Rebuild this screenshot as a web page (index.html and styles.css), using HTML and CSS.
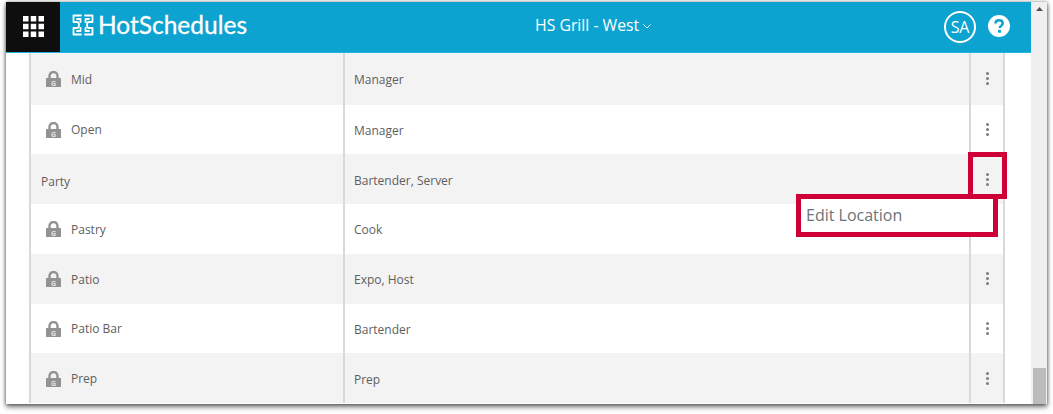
FILE: index.html
```html
<!DOCTYPE html>
<html lang="en">
<head>
<meta charset="utf-8">
<title>HotSchedules</title>
<link rel="stylesheet" href="styles.css">
</head>
<body>
<div class="window">
  <div class="page">
    <header class="topbar">
      <div class="apps">
        <svg width="21" height="21" viewBox="0 0 21 21" fill="#fff"><rect width="5.500" height="5.500"/><rect x="7.750" width="5.500" height="5.500"/><rect x="15.500" width="5.500" height="5.500"/><rect y="7.750" width="5.500" height="5.500"/><rect x="7.750" y="7.750" width="5.500" height="5.500"/><rect x="15.500" y="7.750" width="5.500" height="5.500"/><rect y="15.500" width="5.500" height="5.500"/><rect x="7.750" y="15.500" width="5.500" height="5.500"/><rect x="15.500" y="15.500" width="5.500" height="5.500"/></svg>
      </div>
      <div class="brand">
        <svg class="brand-mark" width="22" height="22" viewBox="0 0 22 22" fill="none" stroke="#fff" stroke-width="1.800" stroke-linejoin="round" stroke-linecap="round"><path d="M9 1.500H1.500V8H5c1.500 0 2 1 2 2.500M13 1.500h7.500V8H17c-1.500 0-2 1-2 2.500M9 20.500H1.500V14H5c1.500 0 2-1 2-2.500M13 20.500h7.500V14H17c-1.500 0-2-1-2-2.500M5 5h3.500v3M17 5h-3.500v3M5 17h3.500v-3M17 17h-3.500v-3"/></svg>
        <span class="brand-name">HotSchedules</span>
      </div>
      <div class="location">HS Grill - West<svg class="chev" width="8" height="5" viewBox="0 0 8 5" fill="none" stroke="#fff" stroke-width="1"><path d="M.5.500 4 4 7.500.500"/></svg></div>
      <div class="avatar">SA</div>
      <svg class="help" width="22" height="22" viewBox="0 0 22 22"><circle cx="11" cy="11" r="11" fill="#fff"/><path d="M7.500 8.500c0-2 1.500-3.200 3.600-3.200 2.100 0 3.600 1.200 3.600 3 0 2.600-3 2.500-3 4.700" fill="none" stroke="#0ca3d0" stroke-width="2.500"/><rect x="10" y="14.800" width="2.900" height="2.900" fill="#0ca3d0"/></svg>
    </header>
    <main class="content">
      <div class="table">
        <div class="row"><div class="cell name"><svg class="lock" width="15" height="16" viewBox="0 0 15 16"><path d="M3.500 8V5a4 4 0 0 1 8 0v3" fill="none" stroke="#929292" stroke-width="2.400"/><rect y="7" width="15" height="9" rx=".5" fill="#929292"/><text x="7.500" y="14.500" class="lock-g">G</text></svg>Mid</div><div class="cell role">Manager</div><div class="cell action"><span class="kebab"><i></i><i></i><i></i></span></div></div>
        <div class="row"><div class="cell name"><svg class="lock" width="15" height="16" viewBox="0 0 15 16"><path d="M3.500 8V5a4 4 0 0 1 8 0v3" fill="none" stroke="#929292" stroke-width="2.400"/><rect y="7" width="15" height="9" rx=".5" fill="#929292"/><text x="7.500" y="14.500" class="lock-g">G</text></svg>Open</div><div class="cell role">Manager</div><div class="cell action"><span class="kebab"><i></i><i></i><i></i></span></div></div>
        <div class="row"><div class="cell name plain">Party</div><div class="cell role">Bartender, Server</div><div class="cell action"><span class="kebab"><i></i><i></i><i></i></span></div></div>
        <div class="row"><div class="cell name"><svg class="lock" width="15" height="16" viewBox="0 0 15 16"><path d="M3.500 8V5a4 4 0 0 1 8 0v3" fill="none" stroke="#929292" stroke-width="2.400"/><rect y="7" width="15" height="9" rx=".5" fill="#929292"/><text x="7.500" y="14.500" class="lock-g">G</text></svg>Pastry</div><div class="cell role">Cook</div><div class="cell action"></div></div>
        <div class="row"><div class="cell name"><svg class="lock" width="15" height="16" viewBox="0 0 15 16"><path d="M3.500 8V5a4 4 0 0 1 8 0v3" fill="none" stroke="#929292" stroke-width="2.400"/><rect y="7" width="15" height="9" rx=".5" fill="#929292"/><text x="7.500" y="14.500" class="lock-g">G</text></svg>Patio</div><div class="cell role">Expo, Host</div><div class="cell action"><span class="kebab"><i></i><i></i><i></i></span></div></div>
        <div class="row"><div class="cell name"><svg class="lock" width="15" height="16" viewBox="0 0 15 16"><path d="M3.500 8V5a4 4 0 0 1 8 0v3" fill="none" stroke="#929292" stroke-width="2.400"/><rect y="7" width="15" height="9" rx=".5" fill="#929292"/><text x="7.500" y="14.500" class="lock-g">G</text></svg>Patio Bar</div><div class="cell role">Bartender</div><div class="cell action"><span class="kebab"><i></i><i></i><i></i></span></div></div>
        <div class="row"><div class="cell name"><svg class="lock" width="15" height="16" viewBox="0 0 15 16"><path d="M3.500 8V5a4 4 0 0 1 8 0v3" fill="none" stroke="#929292" stroke-width="2.400"/><rect y="7" width="15" height="9" rx=".5" fill="#929292"/><text x="7.500" y="14.500" class="lock-g">G</text></svg>Prep</div><div class="cell role">Prep</div><div class="cell action"><span class="kebab"><i></i><i></i><i></i></span></div></div>
      </div>
    </main>
  </div>
  <aside class="scrollbar">
    <svg class="arrow" width="7" height="4" viewBox="0 0 7 4" fill="#505050"><path d="M3.500 0 7 4H0z"/></svg>
    <div class="thumb"></div>
  </aside>
  <div class="callout callout-kebab"></div>
  <div class="callout callout-menu">Edit Location</div>
</div>
</body>
</html>
```
FILE: styles.css
```css
* { box-sizing: border-box; }
html, body { margin: 0; padding: 0; background: #fff; overflow: hidden; }
body { width: 1053px; height: 414px; padding: 2px 6px 0; font-family: "Open Sans", sans-serif; }
.window { position: relative; display: flex; width: 1041px; height: 402px; background: #fff; box-shadow: 0 3px 5px rgba(0,0,0,.55), 1px 0 3px rgba(0,0,0,.25), -1px 0 3px rgba(0,0,0,.2); }
.page { flex: none; width: 1025px; height: 402px; overflow: hidden; }
.topbar { height: 51px; display: flex; align-items: center; background: #0ca3d0; border-bottom: 1px solid #22b4dd; color: #fff; }
.apps { width: 54px; height: 50px; padding-bottom: 2px; background: #0e0e0e; display: flex; align-items: center; justify-content: center; flex: none; }
.brand { width: 439px; height: 44px; display: flex; align-items: center; flex: none; padding-left: 12px; margin-bottom: 4px; }
.brand-mark { flex: none; }
.brand-name { margin-left: 4px; font-family: Lato, sans-serif; font-size: 24.500px; line-height: 28px; -webkit-text-stroke: .3px #fff; }
.location { width: 180px; height: 44px; flex: none; padding-left: 36px; margin-bottom: 4px; font-size: 15.800px; white-space: nowrap; display: flex; align-items: center; }
.chev { margin-left: 4px; margin-top: 3px; }
.avatar { margin-left: 265px; width: 32px; height: 32px; flex: none; border: 2px solid #fff; border-radius: 50%; display: flex; align-items: center; justify-content: center; font-size: 16px; letter-spacing: -.3px; }
.help { margin-left: 12px; margin-bottom: 2px; flex: none; }
.content { padding-left: 23px; }
.table { width: 976px; border-left: 2px solid #d9d9d9; border-right: 2px solid #d9d9d9; }
.row { display: grid; grid-template-columns: 312px 626px 1fr; height: 49.750px; color: #5e5e5e; font-size: 12px; }
.row:first-child { height: 51.500px; }
.row:nth-child(odd) { background: #f3f3f3; }
.cell { display: flex; align-items: center; padding: 1px 0 0 9px; border-left: 2px solid #d9d9d9; white-space: nowrap; }
.cell.role { padding-top: 2px; }
.cell.name { border-left: 0; padding-left: 15px; }
.cell.name.plain { padding: 4px 0 0 10px; }
.lock { margin-right: 10px; flex: none; }
.lock-g { font-family: "Open Sans", sans-serif; font-size: 7px; font-weight: 700; fill: #e3e3e3; text-anchor: middle; }
.cell.action { padding: 0; justify-content: center; }
.kebab { display: flex; flex-direction: column; gap: 2px; }
.kebab i { width: 3px; height: 3px; border-radius: 50%; background: #7d7d7d; }
.scrollbar { flex: none; width: 16px; height: 402px; background: #f0f0f0; display: flex; flex-direction: column; align-items: center; padding-top: 5px; }
.thumb { width: 13px; height: 36px; background: #bcbcbc; margin-top: auto; }
.callout { position: absolute; border: 5px solid #cf0038; }
.callout-kebab { left: 962px; top: 150px; width: 39px; height: 47px; }
.callout-menu { left: 790px; top: 192px; width: 202px; height: 43px; background: #fff; padding-left: 5px; font-size: 16px; line-height: 32px; color: #6b7479; white-space: nowrap; }
```
